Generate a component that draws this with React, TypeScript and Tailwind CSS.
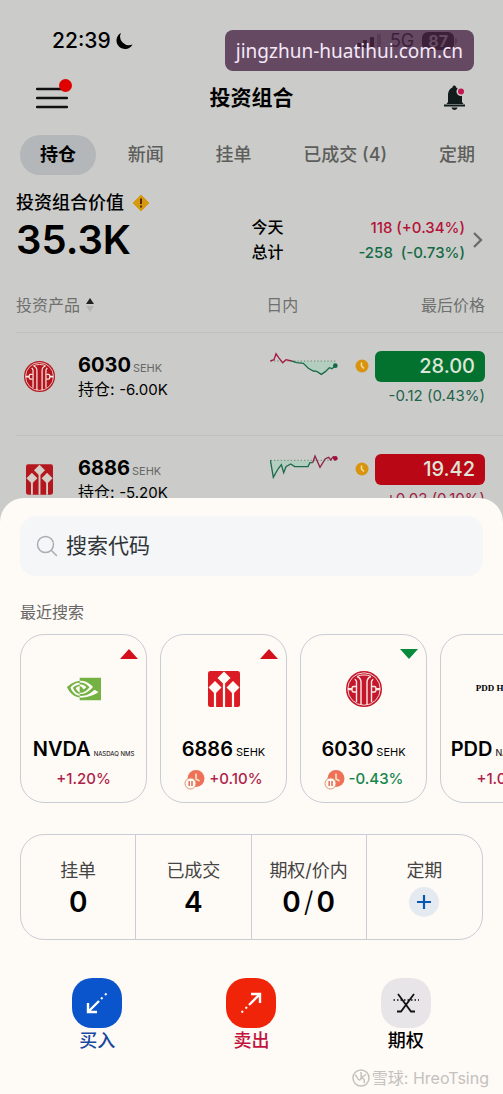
import type { ReactNode } from "react";
import { SiNvidia } from "react-icons/si";

const tabs = ["持仓", "新闻", "挂单", "已成交 (4)", "定期"];

const holdings = [
  {
    code: "6030",
    exchange: "SEHK",
    position: "-6.00K",
    price: "28.00",
    change: "-0.12 (0.43%)",
    up: false,
  },
  {
    code: "6886",
    exchange: "SEHK",
    position: "-5.20K",
    price: "19.42",
    change: "+0.02 (0.10%)",
    up: true,
  },
];

const CiticLogo = ({ className }: { className: string }) => (
  <svg viewBox="0 0 36 36" className={className} fill="none" aria-hidden="true">
    <circle cx="18" cy="18" r="18" fill="currentColor" />
    <g stroke="#f6e9e4" strokeWidth="1.4">
      <circle cx="18" cy="18" r="16.200" strokeWidth="0.900" />
      <path d="M10.500 31V10.500L9 8M25.500 31V10.500L27 8" />
      <path d="M15 34V11c0-2.500-1.500-4.500-4-5.500M21 34V11c0-2.500 1.500-4.500 4-5.500" />
      <path d="M11 5.500c4-2 10-2 14 0" strokeWidth="1" />
      <path d="M10 15.500H7.500c-2 0-2 5.500 0 5.500H10M26 15.500h2.500c2 0 2 5.500 0 5.500H26" />
      <path d="M2 18.200h4M30 18.200h4" strokeWidth="2.200" />
    </g>
  </svg>
);

const HuataiLogo = ({ className, cut }: { className: string; cut: string }) => (
  <svg viewBox="0 0 32 36" className={className} aria-hidden="true">
    <rect width="32" height="36" rx="2.500" fill="currentColor" />
    <g fill={cut}>
      <path d="M16 0.500L22.500 7 16 13.500 9.500 7z" />
      <path d="M7 10l6.500 6.500L7 23 0.500 16.500z" />
      <path d="M25 10l6.500 6.500L25 23l-6.500-6.500z" />
    </g>
    <path
      d="M16 12v24M7 21v15M25 21v15"
      stroke={cut}
      strokeWidth="2.200"
      fill="none"
    />
  </svg>
);

const Sparkline = ({ up }: { up: boolean }) =>
  up ? (
    <svg viewBox="60 370 204 75" className="h-[25px] w-[68px]" fill="none" strokeWidth="4" aria-hidden="true">
      <path d="M60 388L70 440 84 415 94 402 101 426 108 408 122 400 134 408H174L180 396 188 390z" fill="#b3cdbf" />
      <path d="M62 389H258" stroke="#6f8a7c" strokeDasharray="4 6" strokeWidth="3" />
      <path d="M61 388L70 440 84 415 94 402 101 426 108 408 122 400 134 408H174L180 396 188 396" stroke="#1d6a4c" />
      <path d="M188 396L195 376 210 410 226 384 236 380 242 388 250 378 256 383" stroke="#8a2446" />
      <circle cx="256" cy="383" r="7" fill="#a50f3c" />
    </svg>
  ) : (
    <svg viewBox="60 60 204 75" className="h-[25px] w-[68px]" fill="none" strokeWidth="4" aria-hidden="true">
      <path d="M125 90L140 95 160 97 175 112 190 120 200 121 214 130 226 122 238 110 246 113 256 104V90z" fill="#b3cdbf" />
      <path d="M62 90H258" stroke="#6f8a7c" strokeDasharray="4 6" strokeWidth="3" />
      <path d="M61 90L72 86 78 68 86 80 98 95 108 86 125 90" stroke="#a31c42" />
      <path d="M125 90L140 95 160 97 175 112 190 120 200 121 214 130 226 122 238 110 246 113 256 104" stroke="#1d6a4c" />
      <circle cx="256" cy="104" r="7" fill="#0f6a45" />
    </svg>
  );

const Clock = () => (
  <svg viewBox="0 0 14 14" className="size-3.5" fill="none" aria-hidden="true">
    <circle cx="7" cy="7" r="6.500" fill="#d9940f" />
    <path d="M6.500 3.500V7l2.500 2.500" stroke="#f6dfa0" strokeWidth="1.500" />
  </svg>
);

const PausedClock = () => (
  <svg viewBox="0 0 21 21" className="size-[21px]" fill="none" aria-hidden="true">
    <circle cx="12" cy="9.500" r="8.500" fill="#ee7058" />
    <path d="M12 4.500V10l3.500 2" stroke="#fbe3c2" strokeWidth="1.600" />
    <circle cx="6.500" cy="14.500" r="5.500" fill="#fffaf3" stroke="#d9976f" />
    <path d="M5.200 12v5M8 12v5" stroke="#e0604c" strokeWidth="1.400" />
  </svg>
);

const recent: {
  code: string;
  exchange: string;
  exchangeSize: string;
  change: string;
  up: boolean;
  paused: boolean;
  logo: ReactNode;
}[] = [
  {
    code: "NVDA",
    exchange: "NASDAQ NMS",
    exchangeSize: "text-[6px]",
    change: "+1.20%",
    up: true,
    paused: false,
    logo: <SiNvidia className="size-[34px] text-[#74b244]" aria-hidden="true" />,
  },
  {
    code: "6886",
    exchange: "SEHK",
    exchangeSize: "text-[11px]",
    change: "+0.10%",
    up: true,
    paused: true,
    logo: <HuataiLogo className="h-9 w-8 text-[#dc1c24]" cut="#fffaf6" />,
  },
  {
    code: "6030",
    exchange: "SEHK",
    exchangeSize: "text-[11px]",
    change: "-0.43%",
    up: false,
    paused: true,
    logo: <CiticLogo className="size-9 text-[#c5162b]" />,
  },
  {
    code: "PDD",
    exchange: "NASDAQ NMS",
    exchangeSize: "text-[9px]",
    change: "+1.05%",
    up: true,
    paused: false,
    logo: (
      <span className="font-['Liberation_Serif',serif] text-[9px] font-bold whitespace-nowrap">
        PDD Holdings
      </span>
    ),
  },
];

const StatusBar = () => (
  <div className="flex h-6 items-center justify-between pr-[46px] pl-13">
    <div className="flex items-center gap-1">
      <span className="text-[21px] font-medium">22:39</span>
      <svg viewBox="0 0 18 18" className="size-[18px]" aria-hidden="true">
        <path d="M6 1A8.500 8.500 0 1 0 17.500 12.500 9 8.500 0 0 1 6 1z" />
      </svg>
    </div>
    <div className="flex items-center gap-2">
      <svg viewBox="0 0 25 15" className="h-[15px] w-[25px]" aria-hidden="true">
        <rect x="0" y="9" width="4" height="5" rx="1" />
        <rect x="6" y="6" width="4" height="8" rx="1" />
        <rect x="13" y="3" width="4" height="11" rx="1" />
        <rect x="20" y="0" width="4" height="14" rx="1" opacity="0.3" />
      </svg>
      <span className="text-lg">5G</span>
      <div className="flex items-center gap-px">
        <span className="rounded-md bg-black px-1.5 text-base leading-[18px] font-bold text-[#cbccc9]">87</span>
        <span className="h-1.5 w-0.5 rounded-r bg-neutral-500" />
      </div>
    </div>
  </div>
);

const Portfolio = () => (
  <section className="pt-[29px]">
    <StatusBar />
    <header className="mt-6 grid h-[42px] grid-cols-[1fr_auto_1fr] items-center px-9">
      <button aria-label="菜单" className="relative justify-self-start">
        <svg viewBox="0 0 32 22" className="h-[22px] w-8" stroke="#111" strokeWidth="2.400" strokeLinecap="round" aria-hidden="true">
          <path d="M1 2h30M1 11h30M1 20h30" />
        </svg>
        <span className="absolute -top-2 -right-1 size-[13px] rounded-full bg-[#e00000]" />
      </button>
      <h1 className="text-[21px] font-bold">投资组合</h1>
      <button aria-label="提醒" className="justify-self-end">
        <svg viewBox="0 0 24 26" className="h-[26px] w-6" fill="#111b1c" aria-hidden="true">
          <path d="M11 0.500c1.500 0 2 .8 2 2 4 .8 6 3.800 6 8v6.500l1.500 2H3.500L5 17v-6.500c0-4.200 2-7.200 4.500-8 0-1.200.5-2 1.500-2z" />
          <path d="M1 19.500h21v2H1zM8.500 22.500h6c-.5 3.200-5.500 3.200-6 0z" />
          <circle cx="18" cy="6.500" r="4.500" fill="#cbccc9" />
          <circle cx="18" cy="6.500" r="3" fill="#c2184f" />
        </svg>
      </button>
    </header>

    <nav className="mt-4 flex h-10 items-center justify-between pr-2 pl-5 text-lg text-[#5d5e5c]">
      {tabs.map((tab, i) => (
        <button
          key={tab}
          className={`h-10 px-5 whitespace-nowrap ${i === 0 ? "rounded-full bg-[#b4b7b9] font-bold text-black" : "font-medium"}`}
        >
          {tab}
        </button>
      ))}
    </nav>

    <div className="mt-4 pr-5 pl-4">
      <h2 className="flex h-6 items-center gap-2 text-lg font-medium">
        投资组合价值
        <svg viewBox="0 0 18 18" className="size-[18px]" aria-hidden="true">
          <path d="M9 1l8 8-8 8-8-8z" fill="#d69a10" stroke="#d69a10" strokeLinejoin="round" />
          <path d="M9 4.500v5.500M9 11.500v2" stroke="#4a1c10" strokeWidth="1.800" />
        </svg>
      </h2>
      <div className="flex h-[50px] items-center justify-between">
        <strong className="w-1/2 text-[40px] font-semibold">35.3K</strong>
        <a href="#pnl" className="flex flex-1 items-center gap-2 pl-0.5 leading-[25px]">
          <dl className="grid flex-1 grid-cols-[auto_1fr] font-medium">
            <dt>今天</dt>
            <dd className="text-right text-[15px] text-[#b51237]">118 (+0.34%)</dd>
            <dt>总计</dt>
            <dd className="text-right text-[15px] whitespace-pre text-[#136b45]">-258  (-0.73%)</dd>
          </dl>
          <svg viewBox="0 0 10 18" className="h-[18px] w-2.5" fill="none" stroke="#6d6e6c" strokeWidth="2.400" aria-hidden="true">
            <path d="M1 2l7 7-7 7" />
          </svg>
        </a>
      </div>
    </div>

    <div className="mt-3.5 pl-4">
      <table className="w-full table-fixed text-left">
        <thead>
          <tr className="h-[53px] text-base text-[#6f706e]">
            <th className="w-[51%] font-normal">
              <button className="flex items-center gap-1.5">
                投资产品
                <svg viewBox="0 0 8 14" className="h-3.5 w-2" aria-hidden="true">
                  <path d="M4 0l4 6H0z" fill="#222" />
                  <path d="M4 14l4-6H0z" fill="#b5b6b4" />
                </svg>
              </button>
            </th>
            <th className="w-[17%] pl-0.5 font-normal">日内</th>
            <th className="pr-[18px] text-right font-normal">最后价格</th>
          </tr>
        </thead>
        <tbody>
          {holdings.map((row) => (
            <tr key={row.code} className="h-[103px] border-t border-[#bfc0c1] align-top">
              <td className="pt-5 pl-2">
                <div className="flex items-center gap-[23px]">
                  {row.code === "6030" ? (
                    <CiticLogo className="size-[31px] text-[#b3161f]" />
                  ) : (
                    <HuataiLogo className="h-[31px] w-[31px] px-0.5 text-[#b5171e]" cut="#d3cfc8" />
                  )}
                  <div>
                    <div className="flex h-6 items-baseline gap-0.5">
                      <span className="text-xl leading-6 font-bold">{row.code}</span>
                      <span className="text-[11px] text-[#666765]">{row.exchange}</span>
                    </div>
                    <div className="h-6 text-base leading-6">
                      持仓: <span className="text-[15px]">{row.position}</span>
                    </div>
                  </div>
                </div>
              </td>
              <td className="pt-[18px] pl-1.5">
                <Sparkline up={row.up} />
              </td>
              <td className="pt-[18px] pr-[18px]">
                <div className="flex items-center justify-end gap-1.5">
                  <Clock />
                  <span
                    className={`h-[31px] w-[110px] shrink-0 rounded-md pr-2.5 text-right text-xl leading-[31px] font-medium text-[#dce5d8] ${row.up ? "bg-[#ba0716]" : "bg-[#04722f]"}`}
                  >
                    {row.price}
                  </span>
                </div>
                <div
                  className={`mt-0.5 text-right text-[15px] leading-6 whitespace-nowrap ${row.up ? "text-[#9c1c43]" : "text-[#236349]"}`}
                >
                  {row.change}
                </div>
              </td>
            </tr>
          ))}
        </tbody>
      </table>
    </div>
  </section>
);

const Stat = ({ label, children }: { label: string; children: ReactNode }) => (
  <div className="flex flex-col items-center pt-[22px]">
    <span className="text-lg leading-7 text-[#444]">{label}</span>
    <strong className="flex h-[34px] items-center text-[28px] font-semibold">{children}</strong>
  </div>
);

const SearchSheet = () => (
  <section className="relative -mt-10 rounded-t-3xl bg-[#fefaf6] pt-[18px] pb-1">
    <label className="mx-5 flex h-[60px] items-center gap-2 rounded-2xl bg-[#f4f6f8] px-4">
      <svg viewBox="0 0 22 22" className="size-[22px]" fill="none" stroke="#a9adaf" strokeWidth="1.500" strokeLinecap="round" aria-hidden="true">
        <circle cx="9.500" cy="9.500" r="8" />
        <path d="M15.500 15.500L20.500 20.500" />
      </svg>
      <input
        type="search"
        aria-label="搜索代码"
        placeholder="搜索代码"
        className="min-w-0 flex-1 bg-transparent text-[21px] outline-none placeholder:text-[#303436]"
      />
    </label>

    <h2 className="mt-6 px-5 text-base leading-6 text-[#666]">最近搜索</h2>
    <div className="mt-2.5 flex gap-[13px] overflow-hidden pl-5">
      {recent.map((item) => (
        <button
          key={item.code}
          className="relative flex h-[169px] w-[127px] shrink-0 flex-col items-center rounded-3xl border border-[#c9cdd4] pt-9"
        >
          <svg viewBox="0 0 18 10" className="absolute top-3.5 right-2 h-2.5 w-[18px]" aria-hidden="true">
            {item.up ? <path d="M9 0l9 10H0z" fill="#d40f1c" /> : <path d="M0 0h18L9 10z" fill="#088a3c" />}
          </svg>
          <span className="flex h-9 items-center">{item.logo}</span>
          <span className="mt-7 flex items-baseline gap-[3px] whitespace-nowrap">
            <span className="text-xl leading-7 font-semibold">{item.code}</span>
            <span className={item.exchangeSize}>{item.exchange}</span>
          </span>
          <span
            className={`mt-1 flex h-6 items-center gap-1 text-[15px] font-medium ${item.up ? "text-[#ae1f49]" : "text-[#13874c]"}`}
          >
            {item.paused && <PausedClock />}
            {item.change}
          </span>
        </button>
      ))}
    </div>

    <div className="mx-5 mt-[31px] grid h-[106px] grid-cols-4 divide-x divide-[#c9cdd4] rounded-3xl border border-[#c9cdd4] text-center">
      <Stat label="挂单">0</Stat>
      <Stat label="已成交">4</Stat>
      <Stat label="期权/价内">
        0<span className="px-[3px] font-light">/</span>0
      </Stat>
      <Stat label="定期">
        <button aria-label="添加" className="flex size-[30px] items-center justify-center rounded-full bg-[#e5eaf1]">
          <svg viewBox="0 0 16 16" className="size-4" stroke="#0a56b5" strokeWidth="2.200" aria-hidden="true">
            <path d="M8 1v14M1 8h14" />
          </svg>
        </button>
      </Stat>
    </div>

    <div className="mx-5 mt-[38px] grid grid-cols-3 text-lg leading-[26px] font-medium">
      <button className="flex flex-col items-center text-[#17479e]">
        <span className="flex size-[50px] items-center justify-center rounded-[20px] bg-[#0b55cc]">
          <svg viewBox="0 0 22 22" className="size-[22px]" fill="none" stroke="#fff" strokeWidth="2.400" aria-hidden="true">
            <path d="M2 11v9h9M2.500 19.500L13 9" />
            <path d="M15 7l1.500-1.500M19 3l1.500-1.500" strokeWidth="2" />
          </svg>
        </span>
        买入
      </button>
      <button className="flex flex-col items-center text-[#c0143e]">
        <span className="flex size-[50px] items-center justify-center rounded-[20px] bg-[#f02408]">
          <svg viewBox="0 0 22 22" className="size-[22px]" fill="none" stroke="#fff" strokeWidth="2.400" aria-hidden="true">
            <path d="M11 2h9v9M19.500 2.500L9 13" />
            <path d="M7 15l-1.500 1.500M3 19l-1.500 1.500" strokeWidth="2" />
          </svg>
        </span>
        卖出
      </button>
      <button className="flex flex-col items-center">
        <span className="flex size-[50px] items-center justify-center rounded-[20px] bg-[#e8e5e9]">
          <svg viewBox="0 0 26 20" className="h-5 w-[26px]" fill="none" stroke="#111" strokeWidth="1.800" aria-hidden="true">
            <path d="M4 18.500h4L21 1M22 18.500h-4L5 1" />
            <path d="M0.500 7H26" strokeWidth="1.500" strokeDasharray="1.500 2" />
          </svg>
        </span>
        期权
      </button>
    </div>

    <p className="mt-3 flex h-6 items-center justify-end gap-0.5 pr-3.5 text-base text-[#c4c1be]">
      <svg viewBox="0 0 18 18" className="size-[18px]" fill="none" stroke="currentColor" strokeWidth="1.500" aria-hidden="true">
        <circle cx="9" cy="9" r="8" />
        <path d="M3 6c2 0 2 5 4.500 5S9 5 9 3M9 9l5-3.500M9 9c3 0 4 2 3 5" />
      </svg>
      雪球: HreoTsing
    </p>
  </section>
);

export default function App() {
  return (
    <main className="relative overflow-hidden bg-[#cbccc9] font-['Inter','Noto_Sans_CJK_SC',sans-serif] text-black">
      <Portfolio />
      <SearchSheet />
      <div className="absolute top-[30px] right-[29px] h-[41px] rounded-lg bg-[rgba(75,40,73,0.8)] px-[11px] font-['Noto_Sans',sans-serif] text-[19px] leading-[42px] text-[#f4e8f8]">
        jingzhun-huatihui.com.cn
      </div>
    </main>
  );
}
